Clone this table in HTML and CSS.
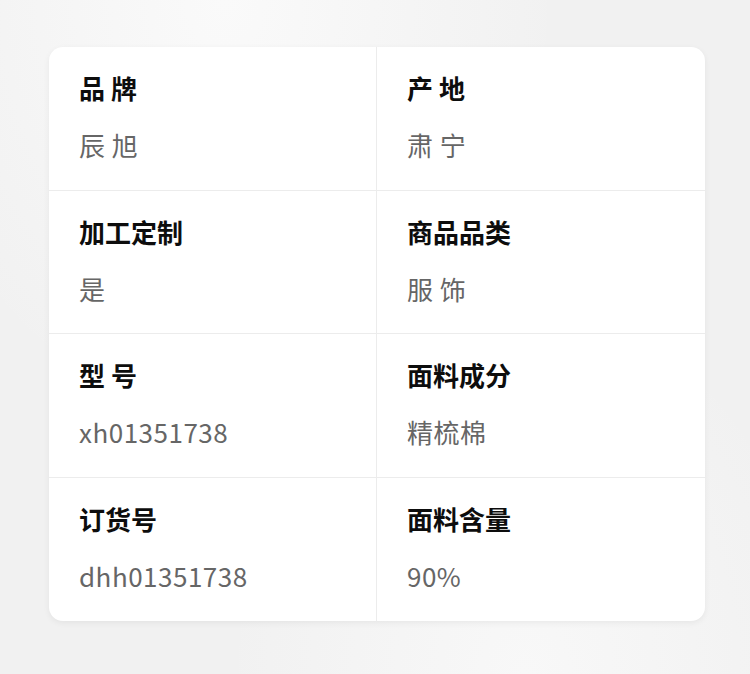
FILE: index.html
```html
<!DOCTYPE html>
<html lang="zh-CN">
<head>
    <meta charset="UTF-8">
    <meta name="viewport" content="width=device-width, initial-scale=1.0">
    <title>商品参数</title>
    <link rel="stylesheet" href="styles.css">
</head>
<body>
    <div class="specs">
        <div class="spec">
            <div class="spec-name">品 牌</div>
            <div class="spec-value">辰 旭</div>
        </div>
        <div class="spec">
            <div class="spec-name">产 地</div>
            <div class="spec-value">肃 宁</div>
        </div>
        <div class="spec">
            <div class="spec-name">加工定制</div>
            <div class="spec-value">是</div>
        </div>
        <div class="spec">
            <div class="spec-name">商品品类</div>
            <div class="spec-value">服 饰</div>
        </div>
        <div class="spec">
            <div class="spec-name">型 号</div>
            <div class="spec-value">xh01351738</div>
        </div>
        <div class="spec">
            <div class="spec-name">面料成分</div>
            <div class="spec-value">精梳棉</div>
        </div>
        <div class="spec">
            <div class="spec-name">订货号</div>
            <div class="spec-value">dhh01351738</div>
        </div>
        <div class="spec">
            <div class="spec-name">面料含量</div>
            <div class="spec-value">90%</div>
        </div>
    </div>
</body>
</html>
```

FILE: styles.css
```css
body {
    margin: 0;
    padding: 47px 45px 53px 49px;
    font-family: "Noto Sans CJK SC", "Noto Sans", sans-serif;
    background-color: #f1f1f1;
    background-image:
        radial-gradient(ellipse at 30% 0%, #fafafa 0%, rgba(250, 250, 250, 0) 45%),
        radial-gradient(ellipse at 70% 100%, #f8f8f8 0%, rgba(248, 248, 248, 0) 40%);
    min-height: 674px;
    box-sizing: border-box;
}

.specs {
    display: grid;
    grid-template-columns: 1fr 1fr;
    background: #ffffff;
    border-radius: 14px;
    overflow: hidden;
    box-shadow: 0 2px 6px rgba(0, 0, 0, 0.06);
}

.spec {
    padding: 23px 30px 26.5px 30px;
    border-bottom: 1px solid #ececec;
}

.spec:nth-child(odd) {
    border-right: 1px solid #ececec;
}

.spec:nth-last-child(-n+2) {
    border-bottom: none;
    padding-bottom: 27px;
}

.spec-name {
    font-size: 26px;
    line-height: 36px;
    font-weight: 700;
    color: #0d0d0d;
}

.spec-value {
    margin-top: 21px;
    font-size: 26px;
    line-height: 36px;
    letter-spacing: 0.5px;
    color: #666666;
}
```
